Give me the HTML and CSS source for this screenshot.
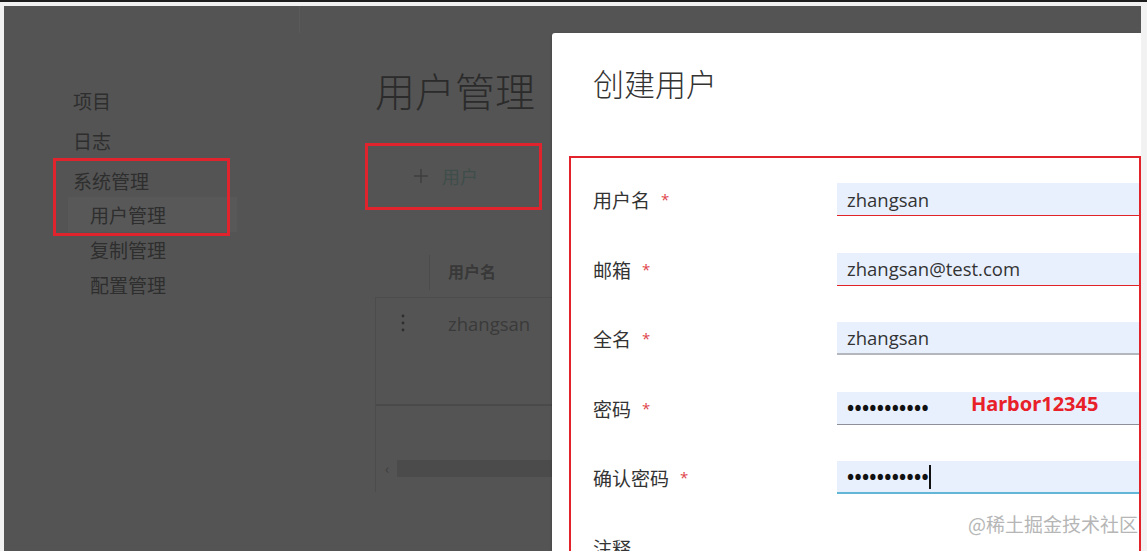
FILE: index.html
```html
<!DOCTYPE html>
<html lang="zh-CN">
<head>
    <meta charset="UTF-8">
    <meta name="viewport" content="width=device-width, initial-scale=1.0">
    <title>Harbor - 创建用户</title>
    <link rel="stylesheet" href="styles.css">
</head>
<body>
    <div class="screen">
        <div class="app">
            <aside class="sidebar">
                <nav class="nav">
                    <a href="#" class="nav-item">项目</a>
                    <a href="#" class="nav-item">日志</a>
                    <div class="nav-group">
                        <div class="nav-item">系统管理</div>
                        <div class="nav-children">
                            <a href="#" class="nav-child active">用户管理</a>
                            <a href="#" class="nav-child">复制管理</a>
                            <a href="#" class="nav-child">配置管理</a>
                        </div>
                    </div>
                </nav>
            </aside>

            <main class="content">
                <h1 class="page-title">用户管理</h1>

                <div class="toolbar">
                    <svg class="plus-icon" width="14" height="14" viewBox="0 0 14 14">
                        <path d="M7 0v14M0 7h14" stroke="currentColor" stroke-width="1.4" fill="none"/>
                    </svg>
                    <span class="toolbar-btn">用户</span>
                </div>

                <div class="grid">
                    <div class="grid-head">
                        <div class="col-action"></div>
                        <div class="col-name">用户名</div>
                    </div>
                    <div class="grid-body">
                        <div class="grid-row">
                            <div class="col-action">
                                <svg width="4" height="18" viewBox="0 0 4 18">
                                    <circle cx="2" cy="2" r="1.4" fill="currentColor"/>
                                    <circle cx="2" cy="9" r="1.4" fill="currentColor"/>
                                    <circle cx="2" cy="16" r="1.4" fill="currentColor"/>
                                </svg>
                            </div>
                            <div class="col-name cell">zhangsan</div>
                        </div>
                        <div class="grid-empty"></div>
                        <div class="grid-foot">
                            <span class="scroll-arrow">‹</span>
                            <div class="scroll-track"></div>
                        </div>
                    </div>
                </div>
            </main>
        </div>

        <!-- annotation boxes from the screenshot -->
        <div class="mark mark-nav"></div>
        <div class="mark mark-btn"></div>

        <div class="modal">
            <h2 class="modal-title">创建用户</h2>
            <div class="form-box">
                <div class="form-row">
                    <label class="form-label">用户名<span class="req">*</span></label>
                    <div class="field invalid"><span class="field-value">zhangsan</span></div>
                </div>
                <div class="form-row">
                    <label class="form-label">邮箱<span class="req">*</span></label>
                    <div class="field invalid"><span class="field-value">zhangsan@test.com</span></div>
                </div>
                <div class="form-row">
                    <label class="form-label">全名<span class="req">*</span></label>
                    <div class="field filled"><span class="field-value">zhangsan</span></div>
                </div>
                <div class="form-row">
                    <label class="form-label">密码<span class="req">*</span></label>
                    <div class="field">
                        <span class="field-value dots">•••••••••••</span>
                        <span class="pw-note">Harbor12345</span>
                    </div>
                </div>
                <div class="form-row">
                    <label class="form-label">确认密码<span class="req">*</span></label>
                    <div class="field focused">
                        <span class="field-value dots">•••••••••••</span><span class="caret"></span>
                    </div>
                </div>
                <div class="form-row">
                    <label class="form-label">注释</label>
                </div>
            </div>
        </div>

        <div class="watermark">@稀土掘金技术社区</div>
    </div>
</body>
</html>
```

FILE: styles.css
```css
* {
    margin: 0;
    padding: 0;
    box-sizing: border-box;
}

body {
    font-family: 'Noto Sans CJK SC', sans-serif;
    background: #f2f2f2;
    border-top: 2px solid #1e1e1e;
    overflow: hidden;
}

a {
    text-decoration: none;
    color: inherit;
}

.screen {
    position: relative;
    margin: 4px 0 0 4px;
    width: 1137px;
    height: 545px;
    overflow: hidden;
    background: #545454;
}

.app {
    display: flex;
    height: 100%;
}

/* sidebar */
.sidebar {
    width: 296px;
    flex-shrink: 0;
    padding: 75px 0 0 69px;
    background: linear-gradient(#5a5a5a, #5a5a5a) no-repeat right top / 1px 27px;
}

.nav-item {
    display: block;
    height: 40px;
    line-height: 40px;
    font-size: 19px;
    color: #2e2e2e;
}

.nav-children {
    margin-top: -4px;
}

.nav-child {
    display: block;
    width: 169px;
    height: 35px;
    line-height: 35px;
    margin-left: -5px;
    padding-left: 22px;
    font-size: 19px;
    color: #2e2e2e;
}

.nav-child.active {
    background: #585858;
}

/* content */
.content {
    flex: 1;
    padding: 60px 0 0 75px;
}

.page-title {
    font-size: 40px;
    line-height: 48px;
    font-weight: 300;
    color: #2b2b2b;
}

.toolbar {
    margin-top: 29px;
    height: 66px;
    display: flex;
    align-items: center;
    gap: 14px;
    padding-left: 39px;
}

.plus-icon {
    color: #3e3e3e;
}

.toolbar-btn {
    font-size: 18px;
    color: #3f4e4a;
}

.grid {
    margin-top: 44px;
    width: 620px;
}

.grid-head {
    display: flex;
    align-items: flex-start;
    height: 44px;
}

.grid-head .col-action {
    height: 35px;
    margin-top: 2px;
    border-right: 1px solid #4b4b4b;
}

.grid-head .col-name {
    line-height: 36px;
}

.col-action {
    width: 55px;
    display: flex;
    justify-content: center;
    align-items: center;
    color: #2e2e2e;
}

.col-name {
    padding-left: 18px;
    font-size: 16px;
    font-weight: 700;
    color: #383838;
}

.grid-body {
    border-left: 1px solid #4c4c4c;
    border-top: 1px solid #4c4c4c;
}

.grid-row {
    display: flex;
    align-items: center;
    height: 50px;
}

.grid-row .col-action {
    margin-left: -1px;
}

.cell {
    font-family: 'Open Sans', sans-serif;
    font-weight: 400;
    font-size: 18.5px;
    color: #3a3a3a;
}

.grid-empty {
    height: 58px;
    border-bottom: 2px solid #4a4a4a;
}

.grid-foot {
    display: flex;
    align-items: center;
    height: 86px;
    padding: 38px 0 0 9px;
}

.scroll-arrow {
    font-size: 14px;
    color: #3c3c3c;
    width: 12px;
}

.scroll-track {
    flex: 1;
    height: 17px;
    background: #4b4b4b;
}

/* red annotation boxes */
.mark {
    position: absolute;
    border: 3px solid #e0232c;
}

.mark-nav {
    left: 49px;
    top: 152px;
    width: 177px;
    height: 78px;
}

.mark-btn {
    left: 361px;
    top: 137px;
    width: 177px;
    height: 67px;
}

/* modal */
.modal {
    position: absolute;
    left: 548px;
    top: 27px;
    width: 640px;
    height: 560px;
    background: #fff;
    border-radius: 3px 0 0 0;
    padding: 30px 0 0 17px;
    box-shadow: 0 1px 3px rgba(0, 0, 0, 0.25);
}

.modal-title {
    margin: 0 0 53px 24px;
    font-size: 31px;
    line-height: 40px;
    font-weight: 300;
    color: #333;
}

.form-box {
    width: 572px;
    border: 2px solid #e3232c;
    border-bottom: none;
    padding: 7px 0 0 22px;
}

.form-row {
    display: flex;
    align-items: center;
    height: 69.5px;
}

.form-label {
    width: 244px;
    flex-shrink: 0;
    font-size: 19px;
    color: #333;
}

.req {
    margin-left: 11px;
    font-family: 'Open Sans', sans-serif;
    font-size: 15px;
    vertical-align: 3px;
    color: #e0454a;
}

.field {
    flex: 1;
    height: 33px;
    display: flex;
    align-items: center;
    padding-left: 10px;
    background: #e8f0fe;
    border-bottom: 1px solid #8e9099;
}

.field.invalid {
    border-bottom-color: #e02427;
}

.field.filled {
    border-bottom: 2px solid #b4b7bc;
}

.field.focused {
    border-bottom: 2px solid #62b6d6;
}

.field-value {
    font-family: 'Open Sans', sans-serif;
    font-size: 18.5px;
    color: #333;
}

.dots {
    font-size: 19px;
    font-weight: 700;
    color: #111;
    letter-spacing: 0.3px;
}

.caret {
    width: 2px;
    height: 24px;
    background: #111;
}

.pw-note {
    align-self: flex-start;
    margin: -2px 0 0 42px;
    font-family: 'Noto Sans', sans-serif;
    font-size: 20px;
    font-weight: 700;
    color: #e8202a;
}

.watermark {
    position: absolute;
    left: 964px;
    top: 504px;
    font-size: 19px;
    color: #b6b6b6;
}
```
